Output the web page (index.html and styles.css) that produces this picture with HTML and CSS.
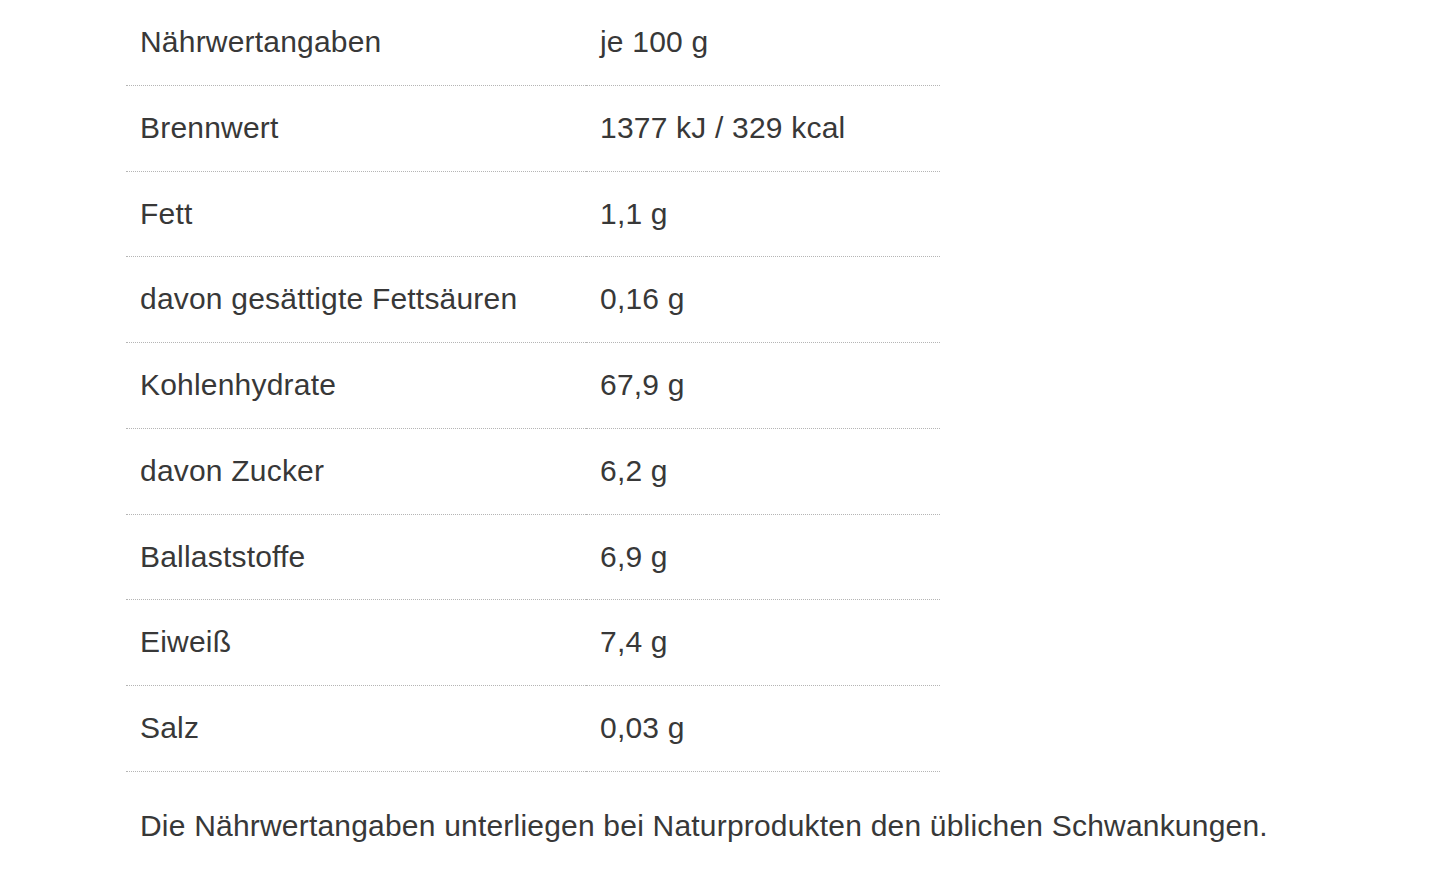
FILE: index.html
```html
<!DOCTYPE html>
<html lang="de">
<head>
<meta charset="utf-8">
<title>Nährwertangaben</title>
<link rel="stylesheet" href="styles.css">
</head>
<body>
<div class="wrap">
  <table class="nutri">
    <tbody>
      <tr><td class="k">Nährwertangaben</td><td class="v">je 100 g</td></tr>
      <tr><td class="k">Brennwert</td><td class="v">1377 kJ / 329 kcal</td></tr>
      <tr><td class="k">Fett</td><td class="v">1,1 g</td></tr>
      <tr><td class="k">davon gesättigte Fettsäuren</td><td class="v">0,16 g</td></tr>
      <tr><td class="k">Kohlenhydrate</td><td class="v">67,9 g</td></tr>
      <tr><td class="k">davon Zucker</td><td class="v">6,2 g</td></tr>
      <tr><td class="k">Ballaststoffe</td><td class="v">6,9 g</td></tr>
      <tr><td class="k">Eiweiß</td><td class="v">7,4 g</td></tr>
      <tr><td class="k">Salz</td><td class="v">0,03 g</td></tr>
    </tbody>
  </table>
  <p class="note">Die Nährwertangaben unterliegen bei Naturprodukten den üblichen Schwankungen.</p>
</div>
</body>
</html>
```
FILE: styles.css
```css
html, body {
  margin: 0;
  padding: 0;
  background: #fff;
}
body {
  font-family: "Liberation Sans", Arial, sans-serif;
  font-size: 30px;
  letter-spacing: 0.2px;
  color: #383838;
}
.wrap {
  padding-left: 126px;
}
.nutri {
  width: 814px;
  border-collapse: collapse;
}
.nutri td {
  padding: 27px 14px;
  line-height: 30.75px;
  border-bottom: 1px dotted #b5b5b5;
  vertical-align: middle;
}
.nutri td.k {
  width: 432px;
}
.note {
  margin: 0;
  padding: 38px 14px 0;
  line-height: 32px;
}
```
